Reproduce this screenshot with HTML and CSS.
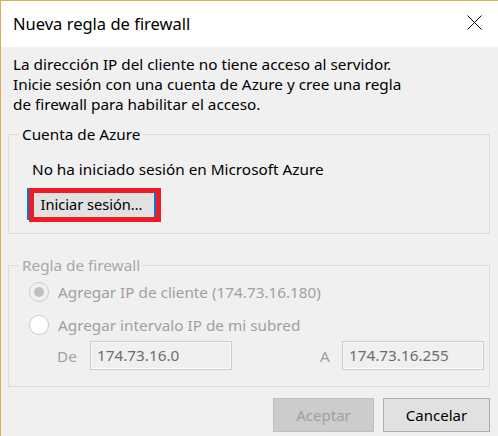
FILE: index.html
```html
<!DOCTYPE html>
<html lang="es">
<head>
<meta charset="utf-8">
<title>Nueva regla de firewall</title>
<link rel="stylesheet" href="styles.css">
</head>
<body>
<div class="dialog">
  <div class="titlebar">
    <span class="title">Nueva regla de firewall</span>
    <svg class="close" width="15" height="15" viewBox="0 0 15 15" aria-label="Cerrar">
      <path d="M0.5 0.5 L14.5 14.5 M14.5 0.5 L0.5 14.5" stroke="#000" stroke-width="1" fill="none"/>
    </svg>
  </div>
  <div class="content">
    <p class="message">La dirección IP del cliente no tiene acceso al servidor.<br>Inicie sesión con una cuenta de Azure y cree una regla<br>de firewall para habilitar el acceso.</p>

    <fieldset class="group group-account">
      <legend class="legend">Cuenta de Azure</legend>
      <p class="status">No ha iniciado sesión en Microsoft Azure</p>
      <div class="signin-wrap">
        <button class="btn btn-signin" type="button">Iniciar sesión...</button>
        <span class="highlight"></span>
      </div>
    </fieldset>

    <fieldset class="group group-rule" disabled>
      <legend class="legend legend-disabled">Regla de firewall</legend>
      <div class="radio-row radio-row-first">
        <span class="radio radio-checked"></span>
        <span class="radio-label">Agregar IP de cliente (174.73.16.180)</span>
      </div>
      <div class="radio-row">
        <span class="radio"></span>
        <span class="radio-label">Agregar intervalo IP de mi subred</span>
      </div>
      <div class="range-row">
        <span class="range-label">De</span>
        <span class="field">174.73.16.0</span>
        <span class="range-label range-label-to">A</span>
        <span class="field">174.73.16.255</span>
      </div>
    </fieldset>

    <div class="actions">
      <button class="btn btn-ok" type="button" disabled>Aceptar</button>
      <button class="btn btn-cancel" type="button">Cancelar</button>
    </div>
  </div>
</div>
</body>
</html>
```

FILE: styles.css
```css
* { box-sizing: border-box; }

html, body {
  margin: 0;
  padding: 0;
  width: 498px;
  height: 436px;
  overflow: hidden;
  background: #f0f0f0;
}

body {
  font-family: "Noto Sans", "Open Sans", "Liberation Sans", sans-serif;
  font-size: 15.3px;
  color: #000;
}

.dialog {
  width: 498px;
  height: 436px;
  border-top: 1px solid #e8a94f;
  border-left: 1px solid #e8a94f;
  background: #f0f0f0;
  display: flex;
  flex-direction: column;
}

.titlebar {
  height: 46px;
  background: #fff;
  display: flex;
  justify-content: space-between;
  align-items: flex-start;
  padding-left: 12px;
  padding-right: 16px;
}

.title {
  font-size: 16.5px;
  line-height: 22px;
  margin-top: 12px;
}

.close {
  margin-top: 14px;
  display: block;
}

.content {
  padding: 7px 8px 0 7px;
}

.message {
  margin: 0 0 0 5px;
  line-height: 20px;
}

.group {
  margin: 10px 0 0 0;
  padding: 0;
  border: 1px solid #dcdcdc;
  min-width: 0;
}

.legend {
  margin-left: 10px;
  padding: 0 3px;
  line-height: 20px;
  color: #000;
}

.legend-disabled { color: #a8a8a8; }

.group-account {
  height: 110px;
}

.status {
  margin: 15px 0 0 23px;
  line-height: 20px;
}

.signin-wrap {
  position: relative;
  margin: 9px 0 0 18px;
  width: 129px;
  height: 32px;
}

.btn {
  font-family: inherit;
  font-size: 15px;
  margin: 0;
  padding: 0;
}

.btn-signin {
  width: 129px;
  height: 32px;
  background: #e1e1e1;
  border: 2px solid #0078d7;
  color: #000;
  font-size: 14.6px;
}

.highlight {
  position: absolute;
  left: 2px;
  top: 0;
  width: 132px;
  height: 34px;
  border: 5px solid #ed1c24;
  pointer-events: none;
}

.group-rule {
  margin-top: 21px;
  height: 132px;
}

.radio-row {
  display: flex;
  align-items: center;
  height: 33px;
  margin-left: 20px;
}

.radio {
  width: 20px;
  height: 20px;
  border: 1px solid #cccccc;
  border-radius: 50%;
  background: #fff;
  display: flex;
  align-items: center;
  justify-content: center;
  flex: none;
}

.radio-checked { background: #f0f0f0; }

.radio-checked::after {
  content: "";
  width: 10px;
  height: 10px;
  border-radius: 50%;
  background: #c0c0c0;
}

.radio-label {
  margin-left: 9px;
  color: #a0a0a0;
}

.range-row {
  display: flex;
  align-items: center;
  margin: 0 0 0 48px;
}

.range-label {
  color: #a0a0a0;
  width: 33px;
}

.range-label-to {
  width: 22px;
  margin-left: 88px;
}

.field {
  width: 142px;
  height: 29px;
  border: 1px solid #cccccc;
  box-shadow: inset 0 0 0 1px #fafafa;
  background: #f0f0f0;
  color: #6d6d6d;
  padding: 0 6px;
  line-height: 27px;
}

.actions {
  display: flex;
  justify-content: flex-end;
  gap: 9px;
  margin-top: 11px;
}

.btn-ok {
  width: 101px;
  height: 34px;
  background: #cccccc;
  border: 1px solid #bfbfbf;
  color: #a0a0a0;
}

.btn-cancel {
  width: 107px;
  height: 34px;
  background: #e1e1e1;
  border: 1px solid #adadad;
  color: #000;
}
```
